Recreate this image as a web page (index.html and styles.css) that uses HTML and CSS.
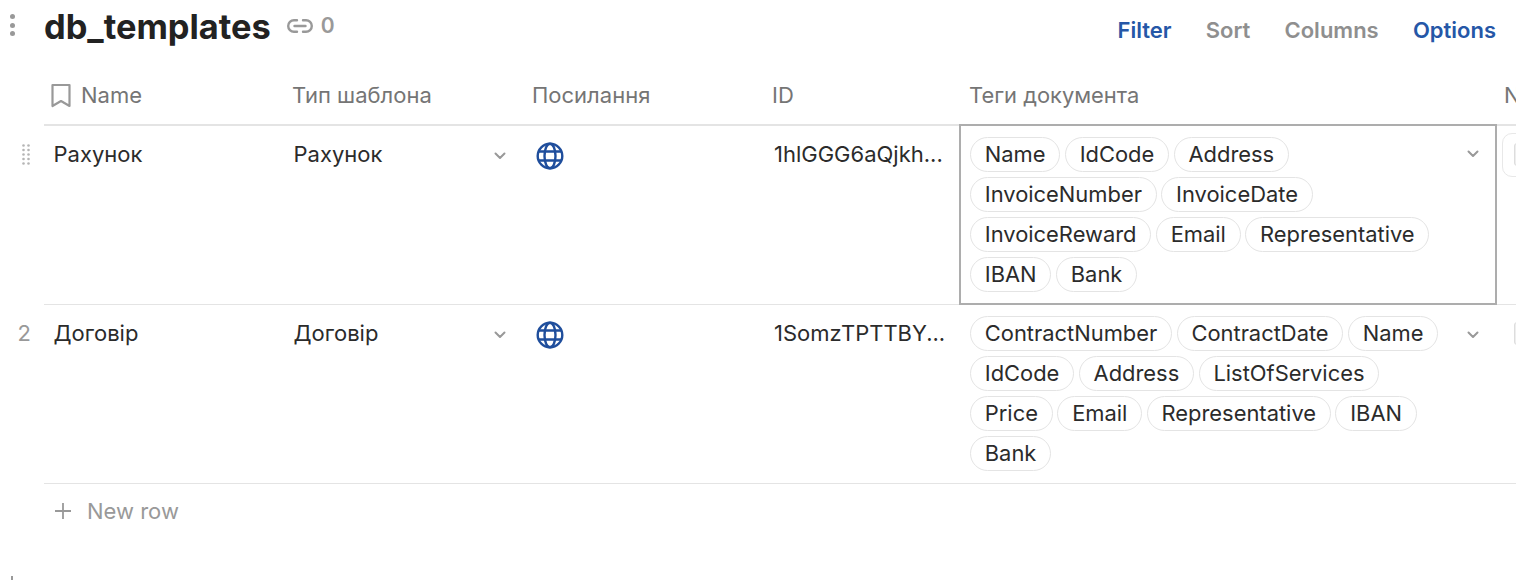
FILE: index.html
```html
<!DOCTYPE html>
<html lang="uk">
<head>
<meta charset="utf-8">
<title>db_templates</title>
<link rel="stylesheet" href="styles.css">
</head>
<body>
<div class="page">
  <header class="topbar">
    <div class="kebab"><i></i><i></i><i></i></div>
    <h1 class="title">db_templates</h1>
    <svg class="link-icon" viewBox="0 0 28 16" width="28" height="16" fill="none" stroke="#999" stroke-width="2.4" stroke-linecap="round"><path d="M11 2.2H8a5.8 5.8 0 0 0 0 11.6h3M17 2.2h3a5.8 5.8 0 0 1 0 11.6h-3M8.500 8h11"/></svg>
    <span class="count">0</span>
    <nav class="actions">
      <a class="act on">Filter</a>
      <a class="act">Sort</a>
      <a class="act">Columns</a>
      <a class="act on">Options</a>
    </nav>
  </header>

  <div class="table">
    <div class="row head">
      <div class="cell c1 name-head">
        <svg viewBox="0 0 20 25" width="20" height="25" fill="none" stroke="#999" stroke-width="2.2" stroke-linejoin="round"><path d="M1.500 2h17v21l-8.500-5-8.500 5z"/></svg>
        <span>Name</span>
      </div>
      <div class="cell c2">Тип шаблона</div>
      <div class="cell c3">Посилання</div>
      <div class="cell c4">ID</div>
      <div class="cell c5">Теги документа</div>
      <div class="cell c6">N</div>
    </div>

    <div class="row body">
      <div class="gutter">
        <svg class="grip" viewBox="0 0 8 22" width="8" height="22" fill="#b5b5b5"><circle cx="1.500" cy="1.500" r="1.300"/><circle cx="6.500" cy="1.500" r="1.300"/><circle cx="1.500" cy="6" r="1.300"/><circle cx="6.500" cy="6" r="1.300"/><circle cx="1.500" cy="10.500" r="1.300"/><circle cx="6.500" cy="10.500" r="1.300"/><circle cx="1.500" cy="15" r="1.300"/><circle cx="6.500" cy="15" r="1.300"/><circle cx="1.500" cy="19.500" r="1.300"/><circle cx="6.500" cy="19.500" r="1.300"/></svg>
      </div>
      <div class="cell c1">Рахунок</div>
      <div class="cell c2 select">Рахунок
        <svg class="chev" viewBox="0 0 12 8" width="12" height="8" fill="none" stroke="#999" stroke-width="2" stroke-linecap="round" stroke-linejoin="round"><path d="M1.500 1.500 6 6l4.500-4.500"/></svg>
      </div>
      <div class="cell c3">
        <svg class="globe" viewBox="0 0 28 28" width="28" height="28" fill="none" stroke="#1f4e9c" stroke-width="2.400"><circle cx="14" cy="14" r="12.300"/><ellipse cx="14" cy="14" rx="5.500" ry="12.300"/><path d="M3 9.500h22M3 18.500h22"/></svg>
      </div>
      <div class="cell c4">1hlGGG6aQjkh...</div>
      <div class="cell c5 tags focused">
        <div class="taglist">
          <span class="tag">Name</span><span class="tag">IdCode</span><span class="tag">Address</span><span class="tag">InvoiceNumber</span><span class="tag">InvoiceDate</span><span class="tag">InvoiceReward</span><span class="tag">Email</span><span class="tag">Representative</span><span class="tag">IBAN</span><span class="tag">Bank</span>
        </div>
        <svg class="chev" viewBox="0 0 12 8" width="12" height="8" fill="none" stroke="#999" stroke-width="2" stroke-linecap="round" stroke-linejoin="round"><path d="M1.500 1.500 6 6l4.500-4.500"/></svg>
      </div>
      <div class="cell c6"><span class="stub"><i></i></span></div>
    </div>

    <div class="row body">
      <div class="gutter num">2</div>
      <div class="cell c1">Договір</div>
      <div class="cell c2 select">Договір
        <svg class="chev" viewBox="0 0 12 8" width="12" height="8" fill="none" stroke="#999" stroke-width="2" stroke-linecap="round" stroke-linejoin="round"><path d="M1.500 1.500 6 6l4.500-4.500"/></svg>
      </div>
      <div class="cell c3">
        <svg class="globe" viewBox="0 0 28 28" width="28" height="28" fill="none" stroke="#1f4e9c" stroke-width="2.400"><circle cx="14" cy="14" r="12.300"/><ellipse cx="14" cy="14" rx="5.500" ry="12.300"/><path d="M3 9.500h22M3 18.500h22"/></svg>
      </div>
      <div class="cell c4">1SomzTPTTBY...</div>
      <div class="cell c5 tags">
        <div class="taglist">
          <span class="tag">ContractNumber</span><span class="tag">ContractDate</span><span class="tag">Name</span><span class="tag">IdCode</span><span class="tag">Address</span><span class="tag">ListOfServices</span><span class="tag">Price</span><span class="tag">Email</span><span class="tag">Representative</span><span class="tag">IBAN</span><span class="tag">Bank</span>
        </div>
        <svg class="chev" viewBox="0 0 12 8" width="12" height="8" fill="none" stroke="#999" stroke-width="2" stroke-linecap="round" stroke-linejoin="round"><path d="M1.500 1.500 6 6l4.500-4.500"/></svg>
      </div>
      <div class="cell c6"><span class="stub plain"><i></i></span></div>
    </div>

    <div class="newrow">
      <svg viewBox="0 0 16 16" width="16" height="16" fill="none" stroke="#999" stroke-width="1.800"><path d="M8 0v16M0 8h16"/></svg>
      <span>New row</span>
    </div>
  </div>
  <i class="corner-mark"></i>
</div>
</body>
</html>
```
FILE: styles.css
```css
* { box-sizing: border-box; }
html, body { margin: 0; padding: 0; height: 100%; overflow: hidden; background: #fff; }
body { font-family: Inter, "Liberation Sans", sans-serif; font-size: 22px; color: #2b2b2b; }
.page { width: 1516px; height: 580px; overflow: hidden; padding-left: 44px; position: relative; }
.corner-mark { position: absolute; left: 11px; top: 576px; width: 2px; height: 4px; background: #999; }

.topbar { display: flex; align-items: center; height: 60px; position: relative; padding-right: 20px; margin-bottom: 11px; }
.kebab { position: absolute; left: -34px; top: 14px; display: flex; flex-direction: column; gap: 3.5px; }
.kebab i { display: block; width: 5px; height: 5px; border-radius: 50%; background: #999; }
.title { margin: -7px 0 0; font-size: 34.4px; font-weight: 700; color: #222; line-height: 40px; }
.link-icon { margin: -8px 0 0 15px; }
.count { margin: -10px 0 0 7px; color: #999; font-size: 21px; font-weight: 600; }
.actions { margin-left: auto; display: flex; gap: 34.2px; }
.act { color: #8f8f8f; font-weight: 600; font-size: 22px; }
.act.on { color: #2557a7; }

.row { display: flex; width: 1472px; position: relative; }
.cell { flex: none; }
.c1, .c2, .c3 { width: 240px; }
.c4 { width: 195px; }
.c5 { width: 538px; }
.c6 { width: 60px; }

.head { height: 55px; border-bottom: 2px solid #e4e4e4; color: #757575; align-items: center; padding-bottom: 5px; }
.head .c1 { padding-left: 7px; display: flex; align-items: center; gap: 10px; }
.head .c2, .head .c3, .head .c4 { padding-left: 8px; }
.head .c5 { padding-left: 10px; font-size: 21.9px; }
.head .c6 { padding-left: 7px; }

.body { height: 179px; border-bottom: 1px solid #e4e4e4; }
.gutter { position: absolute; left: -44px; top: 0; width: 44px; }
.grip { position: absolute; left: 22px; top: 18px; }
.num { color: #999; text-align: right; padding: 14px 13px 0 0; line-height: 28px; }

.body .cell { padding-top: 14px; line-height: 28px; }
.body .c1 { padding-left: 9.500px; }
.body .c2 { padding-left: 9.500px; position: relative; }
.body .c3 { padding: 16px 0 0 12px; }
.body .c4 { padding-left: 10px; }
.chev { position: absolute; }
.c2 .chev { right: 18px; top: 26px; }
.globe { display: block; }
.body .tags { position: relative; padding: 11px 10px 0 11px; }
.tags .chev { right: 18px; top: 26px; }
.body .tags.focused { border: 2px solid #adadad; margin-top: -2px; height: 181px; padding: 11px 8px 0 9px; }
.tags.focused .chev { right: 16px; top: 24px; }
.taglist { display: flex; flex-wrap: wrap; gap: 5px 4.6px; width: 480px; }
.tag { height: 35px; line-height: 33px; padding: 0 13.8px; border: 1px solid #e4e4e4; border-radius: 18px; color: #2b2b2b; font-size: 21.9px; }
.c6 .stub { display: block; margin: -7px 0 0 5px; width: 40px; height: 44px; border: 1px solid #e8e8e8; border-radius: 10px; padding: 9px 0 0 11px; }
.c6 .stub.plain { border-color: transparent; }
.c6 .stub i { display: block; width: 10px; height: 23px; background: #eee; border: 1px solid #ddd; border-radius: 3px; }

.newrow { display: flex; align-items: center; gap: 16px; height: 54px; padding-left: 11px; color: #999; }
```
